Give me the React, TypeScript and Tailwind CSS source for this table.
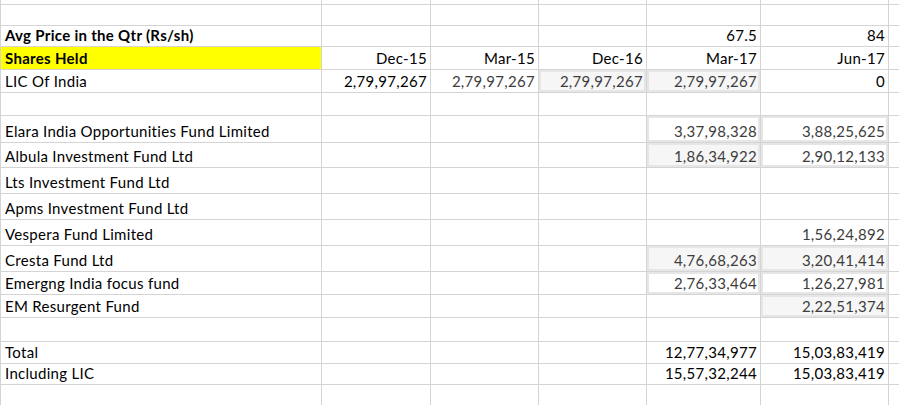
import React from 'react';

type Cell = { v?: string; dark?: boolean; shade?: boolean; box?: boolean };

interface Row {
  h: string;
  label?: string;
  bold?: boolean;
  yellow?: boolean;
  cells: Cell[]; // cols B..F
}

// column widths B..F
const colW = ['w-[109px]', 'w-[108px]', 'w-[108px]', 'w-[114px]', 'w-[128px]'];
const e: Cell = {};
const blank = [e, e, e, e, e];

const rows: Row[] = [
  { h: 'h-[5px]', cells: blank },
  { h: 'h-[21px]', cells: blank },
  { h: 'h-[21px]', label: 'Avg Price in the Qtr (Rs/sh)', bold: true, cells: [e, e, e, { v: '67.5', dark: true }, { v: '84', dark: true }] },
  {
    h: 'h-[23px]',
    label: 'Shares Held',
    bold: true,
    yellow: true,
    cells: [
      { v: 'Dec-15', dark: true },
      { v: 'Mar-15', dark: true },
      { v: 'Dec-16', dark: true },
      { v: 'Mar-17', dark: true },
      { v: 'Jun-17', dark: true },
    ],
  },
  {
    h: 'h-[23px]',
    label: 'LIC Of India',
    cells: [
      { v: '2,79,97,267', dark: true },
      { v: '2,79,97,267' },
      { v: '2,79,97,267', shade: true, box: true },
      { v: '2,79,97,267', shade: true, box: true },
      { v: '0', dark: true },
    ],
  },
  { h: 'h-[23px]', cells: blank },
  { h: 'h-[27px]', label: 'Elara India Opportunities Fund Limited', cells: [e, e, e, { v: '3,37,98,328', box: true }, { v: '3,88,25,625', box: true }] },
  { h: 'h-[25px]', label: 'Albula Investment Fund Ltd', cells: [e, e, e, { v: '1,86,34,922', shade: true, box: true }, { v: '2,90,12,133', box: true }] },
  { h: 'h-[26px]', label: 'Lts Investment Fund Ltd', cells: blank },
  { h: 'h-[26px]', label: 'Apms Investment Fund Ltd', cells: blank },
  { h: 'h-[26px]', label: 'Vespera Fund Limited', cells: [e, e, e, e, { v: '1,56,24,892' }] },
  { h: 'h-[26px]', label: 'Cresta Fund Ltd', cells: [e, e, e, { v: '4,76,68,263', shade: true, box: true }, { v: '3,20,41,414', shade: true, box: true }] },
  { h: 'h-[23px]', label: 'Emergng India focus fund', cells: [e, e, e, { v: '2,76,33,464', box: true }, { v: '1,26,27,981', box: true }] },
  { h: 'h-[23px]', label: 'EM Resurgent Fund', cells: [e, e, e, e, { v: '2,22,51,374', shade: true, box: true }] },
  { h: 'h-[24px]', cells: blank },
  { h: 'h-[22px]', label: 'Total', cells: [e, e, e, { v: '12,77,34,977', dark: true }, { v: '15,03,83,419', dark: true }] },
  { h: 'h-[21px]', label: 'Including LIC', cells: [e, e, e, { v: '15,57,32,244', dark: true }, { v: '15,03,83,419', dark: true }] },
  { h: 'h-[21px]', cells: blank },
];

export default function App() {
  return (
    <div className="w-[899px] h-[405px] overflow-hidden bg-white text-[15px] leading-none tracking-[0.3px] font-['Lato','Noto_Sans',sans-serif]">
      <div className="flex flex-col border-l border-[#d4d4d4] w-max">
        {rows.map((r, ri) => (
          <div key={ri} className={`flex ${r.h}`}>
            <div
              className={`w-[321px] flex items-end px-[4px] pb-[3px] border-r border-b border-[#d4d4d4] text-black ${r.bold ? 'font-bold' : ''} ${r.yellow ? 'bg-[#ffff00]' : ''}`}
            >
              {r.label}
            </div>
            {r.cells.map((c, ci) => (
              <div
                key={ci}
                className={`${colW[ci]} flex items-end justify-end px-[3px] pb-[3px] border-r border-b border-[#d4d4d4] ${c.dark ? 'text-black' : 'text-[#3d3d3d]'} ${c.shade ? 'bg-[#f6f6f6]' : ''} ${c.box ? 'shadow-[inset_0_0_0_2px_#e6e6e6]' : ''}`}
              >
                {c.v}
              </div>
            ))}
            <div className="w-[100px] border-r border-b border-[#d4d4d4]" />
          </div>
        ))}
      </div>
    </div>
  );
}
